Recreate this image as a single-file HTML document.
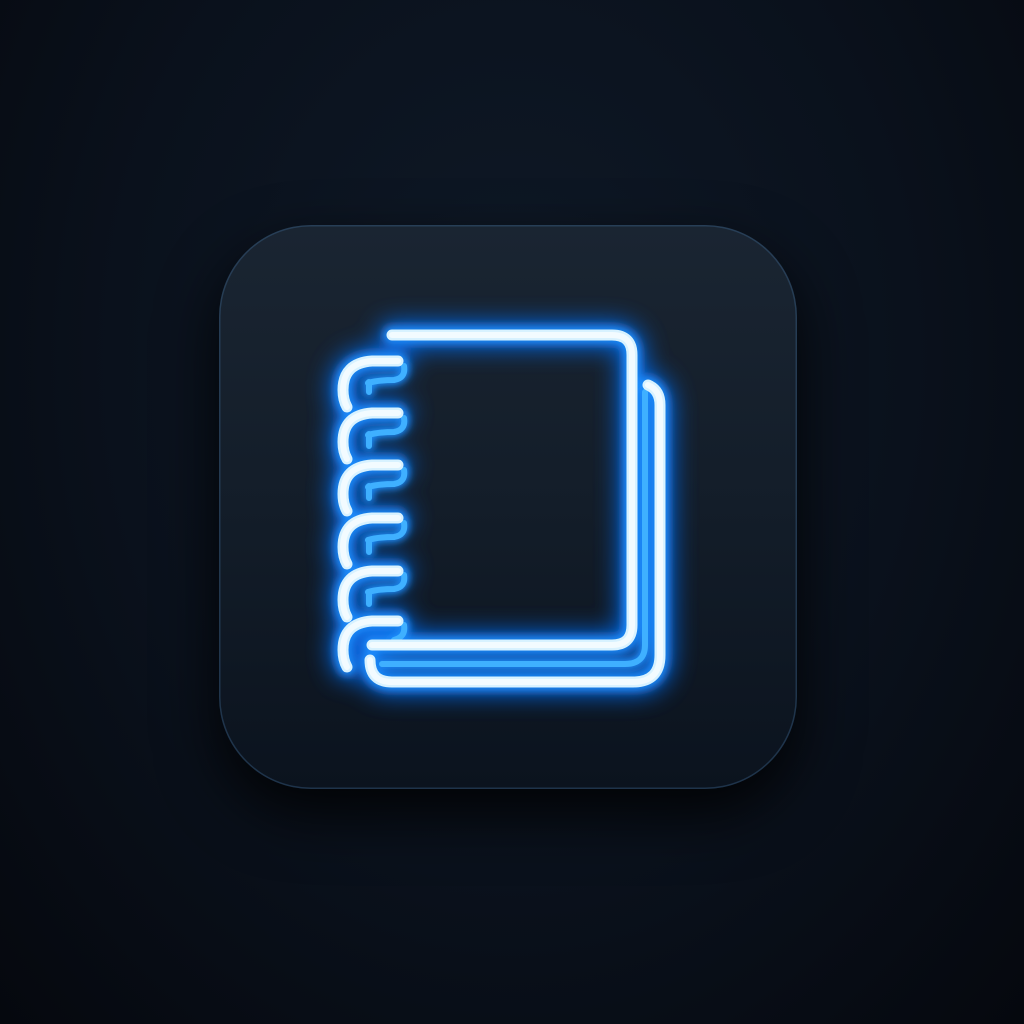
<!DOCTYPE html>
<html><head><style>
html,body{margin:0;padding:0;width:1024px;height:1024px;overflow:hidden;background:radial-gradient(ellipse at 50% 35%,#0f1927 0%,#0a111c 55%,#05080e 100%);}
.card{position:absolute;left:219px;top:225px;width:578px;height:564px;border-radius:92px;background:linear-gradient(180deg,#1a2532 0%,#131d29 50%,#0b131e 100%);box-shadow:inset 0 0 0 1.5px rgba(60,100,140,0.4),0 25px 60px rgba(0,0,0,0.85);}
svg{position:absolute;left:0;top:0;}
</style></head><body>
<div class="card"></div>
<svg width="1024" height="1024" viewBox="0 0 1024 1024">
<defs>
<filter id="big" x="-30%" y="-30%" width="160%" height="160%"><feGaussianBlur stdDeviation="12"/></filter>
<filter id="mid" x="-30%" y="-30%" width="160%" height="160%"><feGaussianBlur stdDeviation="4"/></filter>
<g id="main" fill="none" stroke-linecap="round" stroke-linejoin="round">
<path d="M392 335 H612 Q632 335 632 355 V625 Q632 645 612 645 H372"/>
<path d="M648 385 Q660 390 660 405 V655 Q660 682 633 682 H392 Q370 682 370 660"/>
<path d="M398 361 H372 Q343 363 343 390 Q343 400 347 407"/>
<path d="M398 413 H372 Q343 415 343 442 Q343 452 347 459"/>
<path d="M398 465 H372 Q343 467 343 494 Q343 504 347 511"/>
<path d="M398 518 H372 Q343 520 343 547 Q343 557 347 564"/>
<path d="M398 571 H372 Q343 573 343 600 Q343 610 347 617"/>
<path d="M398 621 H372 Q343 623 343 650 Q343 660 347 667"/>
</g>
<g id="inner" fill="none" stroke-linecap="round" stroke-linejoin="round">
<path d="M382 664 H625 Q645 664 645 645 V392"/>
<path d="M369 382 V392 M369 434 V446 M369 486 V498 M369 540 V552 M369 592 V604"/>
<path d="M368 383 Q378 380 394 380 Q406 378 404 366"/>
<path d="M368 435 Q378 432 394 432 Q406 430 404 418"/>
<path d="M368 487 Q378 484 394 484 Q406 482 404 470"/>
<path d="M368 540 Q378 537 394 537 Q406 535 404 523"/>
<path d="M368 592 Q378 589 394 589 Q406 587 404 575"/>
<path d="M394 640 Q406 637 404 625"/>
</g>
</defs>
<use href="#main" stroke="#0a6cf0" stroke-width="26" filter="url(#big)" opacity="0.9"/>
<use href="#main" stroke="#1f8fff" stroke-width="18" filter="url(#mid)" opacity="0.9"/>
<use href="#inner" stroke="#1f8fff" stroke-width="10" filter="url(#mid)"/>
<use href="#inner" stroke="#3fb0ff" stroke-width="6"/>
<use href="#main" stroke="#d8f2ff" stroke-width="11"/>
<use href="#main" stroke="#f2fbff" stroke-width="6"/>
</svg>
</body></html>
